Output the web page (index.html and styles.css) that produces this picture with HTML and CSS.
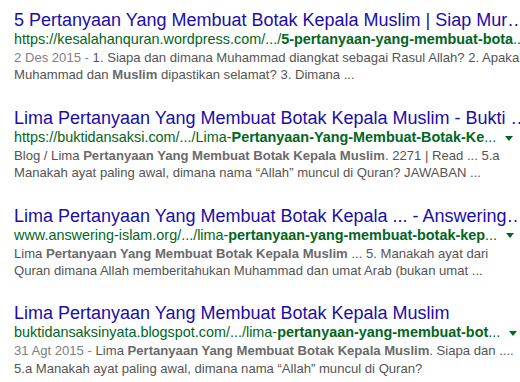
FILE: index.html
```html
<!DOCTYPE html>
<html lang="id">
<head>
    <meta charset="UTF-8">
    <title>Hasil Penelusuran</title>
    <link rel="stylesheet" href="styles.css">
</head>
<body>
    <div class="results">
        <div class="result">
            <h3 class="title"><a href="#">5 Pertanyaan Yang Membuat Botak Kepala Muslim | Siap Mur…</a></h3>
            <div class="url">https://kesalahanquran.wordpress.com/.../<b>5-pertanyaan-yang-membuat-bota</b>...<span class="arrow"></span></div>
            <div class="snippet"><span class="date">2 Des 2015 - </span>1. Siapa dan dimana Muhammad diangkat sebagai Rasul Allah? 2. Apakah<br>Muhammad dan <b>Muslim</b> dipastikan selamat? 3. Dimana ...</div>
        </div>

        <div class="result">
            <h3 class="title"><a href="#">Lima Pertanyaan Yang Membuat Botak Kepala Muslim - Bukti …</a></h3>
            <div class="url">https://buktidansaksi.com/.../Lima-<b>Pertanyaan-Yang-Membuat-Botak-Ke</b>...<span class="arrow"></span></div>
            <div class="snippet">Blog / Lima <b>Pertanyaan Yang Membuat Botak Kepala Muslim</b>. 2271 | Read ... 5.a<br>Manakah ayat paling awal, dimana nama “Allah” muncul di Quran? JAWABAN ...</div>
        </div>

        <div class="result">
            <h3 class="title"><a href="#">Lima Pertanyaan Yang Membuat Botak Kepala ... - Answering…</a></h3>
            <div class="url">www.answering-islam.org/.../lima-<b>pertanyaan-yang-membuat-botak-kep</b>...<span class="arrow"></span></div>
            <div class="snippet">Lima <b>Pertanyaan Yang Membuat Botak Kepala Muslim</b> ... 5. Manakah ayat dari<br>Quran dimana Allah memberitahukan Muhammad dan umat Arab (bukan umat ...</div>
        </div>

        <div class="result">
            <h3 class="title"><a href="#">Lima Pertanyaan Yang Membuat Botak Kepala Muslim</a></h3>
            <div class="url">buktidansaksinyata.blogspot.com/.../lima-<b>pertanyaan-yang-membuat-bot</b>...<span class="arrow"></span></div>
            <div class="snippet"><span class="date">31 Agt 2015 - </span>Lima <b>Pertanyaan Yang Membuat Botak Kepala Muslim</b>. Siapa dan ....<br>5.a Manakah ayat paling awal, dimana nama “Allah” muncul di Quran?</div>
        </div>
    </div>
</body>
</html>
```

FILE: styles.css
```css
body {
    margin: 0;
    padding: 0;
    background: #fff;
    font-family: "Liberation Sans", Arial, sans-serif;
    overflow: hidden;
}

.results {
    padding: 10px 0 0 14px;
}

.result {
    margin-bottom: 24px;
}

.title {
    margin: 0;
    font-size: 18px;
    font-weight: normal;
    line-height: 21px;
    white-space: nowrap;
}

.title a {
    color: #1a0dab;
    text-decoration: none;
}

.url {
    font-size: 14.4px;
    line-height: 16px;
    color: #006621;
    white-space: nowrap;
}

.arrow {
    display: inline-block;
    margin-left: 9px;
    vertical-align: middle;
    border-top: 5px solid #006621;
    border-left: 4px solid transparent;
    border-right: 4px solid transparent;
}

.snippet {
    margin-top: 2px;
    font-size: 13.1px;
    line-height: 17.4px;
    color: #545454;
    white-space: nowrap;
}

.snippet b {
    color: #6a6a6a;
}

.date {
    color: #808080;
}
```
